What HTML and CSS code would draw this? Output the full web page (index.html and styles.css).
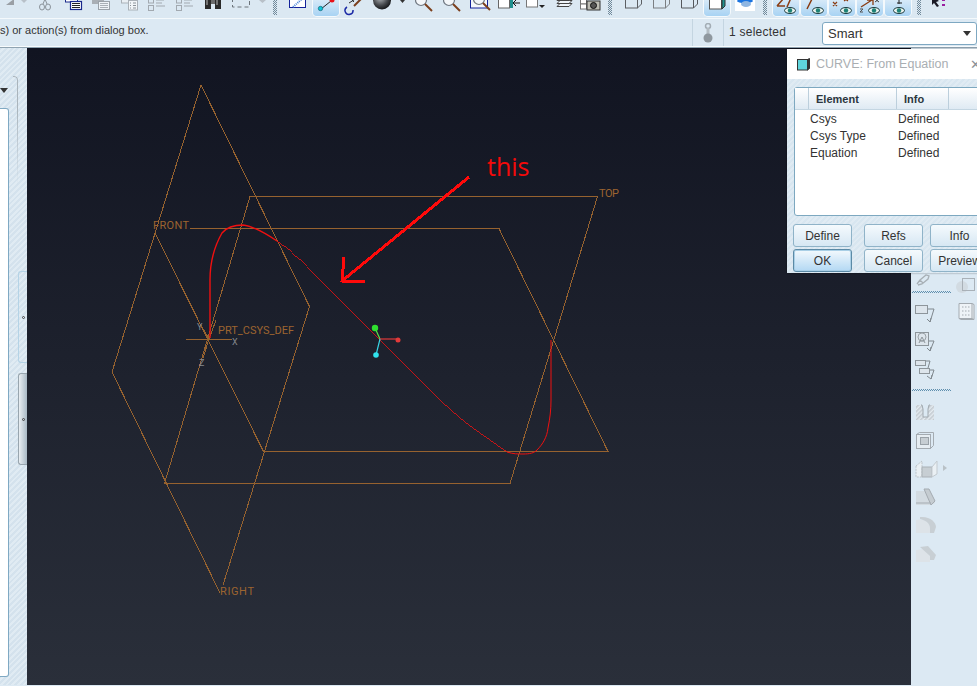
FILE: index.html
```html
<!DOCTYPE html>
<html lang="en">
<head>
<meta charset="utf-8">
<title>CURVE: From Equation</title>
<link rel="stylesheet" href="styles.css">
</head>
<body>
<svg class="defs" aria-hidden="true">
  <defs>
    <radialGradient id="ball" cx="0.4" cy="0.35" r="0.7"><stop offset="0" stop-color="#b4b8bc"/><stop offset="0.6" stop-color="#45484c"/><stop offset="1" stop-color="#0e0f11"/></radialGradient>
    <pattern id="hatch" width="3" height="3" patternUnits="userSpaceOnUse" patternTransform="rotate(45)"><rect width="3" height="3" fill="#e4ebf0"/><rect width="1.500" height="3" fill="#c3cad0"/></pattern>
    <symbol id="eye" viewBox="0 0 12 7"><ellipse cx="6" cy="3.500" rx="5.500" ry="3" fill="#e9f2ee" stroke="#1c3b3d"/><circle cx="6" cy="3.500" r="2.200" fill="#1d8276"/></symbol>
    <symbol id="glass" viewBox="0 0 18 14"><circle cx="6" cy="1" r="5.500" fill="#f4f7fa" stroke="#6f7780" stroke-width="1.200"/><path d="M10 5l7 7" stroke="#7b3f1d" stroke-width="2"/></symbol>
  </defs>
</svg>
<div class="app">
  <div class="toolbar">
    <div class="tool small"><svg class="ic-s" viewBox="0 0 14 16"><path d="M4 5L12 -1V5z" fill="#9a9fa5"/></svg></div>
    <div class="tool small"><svg class="ic-s" viewBox="0 0 14 16"><path d="M4 0h6l-3 3z" fill="#b8c0c8"/></svg></div>
    <div class="tool"><svg class="ic" viewBox="0 0 26 16"><g fill="none" stroke="#8b939a"><ellipse cx="10" cy="7" rx="2.500" ry="3"/><ellipse cx="16" cy="7" rx="2.500" ry="3"/><path d="M11 4l2-5M15 4l-2-5"/></g></svg></div>
    <div class="tool"><svg class="ic" viewBox="0 0 26 16"><rect x="5.500" y="-3" width="12" height="5" fill="#fff" stroke="#1a2a8c"/><rect x="10.500" y="1.500" width="11" height="8" fill="#fff" stroke="#1a2a8c" stroke-width="1.200"/><path d="M12 3.500h8M12 5.500h8M12 7.500h8" stroke="#222"/></svg></div>
    <div class="tool"><svg class="ic" viewBox="0 0 26 16"><rect x="4" y="-3" width="12" height="7" fill="#a9afb5"/><rect x="10.500" y="1.500" width="11" height="8" fill="#eef3f7" stroke="#9aa2a9"/><path d="M12 3.500h8M12 5.500h8M12 7.500h8" stroke="#a9b0b6"/></svg></div>
    <div class="tool"><svg class="ic" viewBox="0 0 26 16"><rect x="5.500" y="-3" width="8" height="6" fill="#e9eff4" stroke="#aab1b8"/><rect x="12.500" y="0.500" width="9" height="9.500" fill="#f1f5f8" stroke="#aab1b8"/><path d="M14 3h1M14 5.500h1M14 8h1M17 3h3M17 5.500h3M17 8h3" stroke="#8b939a"/></svg></div>
    <div class="tool"><svg class="ic" viewBox="0 0 26 16"><g fill="none" stroke="#a2a9b0"><rect x="4.500" y="-2" width="5" height="5"/><rect x="4.500" y="5.500" width="5" height="5"/><path d="M12 0h8M12 3h6M12 6h9"/></g></svg></div>
    <div class="tool"><svg class="ic" viewBox="0 0 26 16"><g fill="none" stroke="#a2a9b0"><rect x="4.500" y="-2" width="5" height="5"/><rect x="4.500" y="5.500" width="5" height="5"/><path d="M12 0h8M12 3h6M12 6h9"/></g></svg></div>
    <div class="tool"><svg class="ic" viewBox="0 0 26 16"><rect x="5" y="-2" width="6" height="11" fill="#2a2a2a"/><rect x="15" y="-2" width="6" height="11" fill="#2a2a2a"/><rect x="11" y="-1" width="4" height="5" fill="#6b6b6b"/><path d="M7 0v5M17 0v5" stroke="#bbb"/></svg></div>
    <div class="tool"><svg class="ic" viewBox="0 0 26 16"><rect x="4.500" y="-3" width="17" height="10" fill="none" stroke="#6c747b" stroke-dasharray="4 3"/></svg></div>
    <div class="tool small"><svg class="ic-s" viewBox="0 0 14 16"><path d="M3 0h7l-3.500 3z" fill="#b8c0c8"/></svg></div>
    <div class="sep"></div>
    <div class="tool"><svg class="ic" viewBox="0 0 26 16"><rect x="4.500" y="-3" width="16" height="10.500" fill="#fff" stroke="#14239a"/><path d="M8 7l10-9" stroke="#4a86d8" stroke-width="2" stroke-dasharray="1 1"/></svg></div>
    <div class="tool on"><svg class="ic" viewBox="0 0 26 16"><path d="M8 9l10-8" stroke="#222"/><circle cx="7.500" cy="8.500" r="2.200" fill="#11c6d8" stroke="#06566a" stroke-width=".6"/><circle cx="19" cy="0" r="2.500" fill="#e81218"/></svg></div>
    <div class="tool"><svg class="ic" viewBox="0 0 26 16"><path d="M10 -1l3 3M16 -2L8 3" stroke="#333"/><path d="M13 6l8-8" stroke="#7b3f1d" stroke-width="2"/><path d="M6 7a4 4 0 1 0 6 3" fill="none" stroke="#1b2aa6" stroke-width="1.500"/></svg></div>
    <div class="tool"><svg class="ic" viewBox="0 0 26 16"><circle cx="13" cy="0.500" r="9" fill="url(#ball)"/></svg></div>
    <div class="tool arrow"><svg class="ic-a" viewBox="0 0 13 16"><path d="M4 0h5l-2.500 3z" fill="#333"/></svg></div>
    <div class="tool"><svg class="ic" viewBox="0 0 26 16"><use href="#glass" x="5" y="-1" width="18" height="14"/></svg></div>
    <div class="tool"><svg class="ic" viewBox="0 0 26 16"><use href="#glass" x="5" y="-1" width="18" height="14"/></svg></div>
    <div class="tool"><svg class="ic" viewBox="0 0 26 16"><rect x="4.500" y="-3" width="17" height="11" fill="#f5f8fb" stroke="#14239a"/><use href="#glass" x="7" y="-2" width="18" height="14"/></svg></div>
    <div class="tool"><svg class="ic" viewBox="0 0 26 16"><rect x="4.500" y="-3" width="11" height="11" fill="#fff" stroke="#666"/><rect x="16" y="-3" width="3" height="11" fill="#20908f"/><path d="M26 3h-7M22 0l-3 3 3 3" stroke="#111" fill="none"/></svg></div>
    <div class="tool"><svg class="ic" viewBox="0 0 26 16"><rect x="4.500" y="-3" width="11" height="10" fill="#fff" stroke="#777"/><path d="M17 5h6l-3 3z" fill="#222"/></svg></div>
    <div class="tool"><svg class="ic" viewBox="0 0 26 16"><g fill="#eef3f7" stroke="#444"><path d="M7 6.500h12l3-3H10z"/><path d="M7 3.500h12l3-3H10z"/><path d="M7 0.500h12l3-3H10z"/></g></svg></div>
    <div class="tool"><svg class="ic" viewBox="0 0 26 16"><rect x="2.500" y="-1" width="6" height="5" fill="#fff" stroke="#777"/><rect x="2.500" y="4" width="6" height="5" fill="#fff" stroke="#777"/><rect x="9" y="1" width="13" height="9" fill="#bdbdb5" stroke="#333"/><circle cx="15.500" cy="5.500" r="3" fill="#555" stroke="#111"/></svg></div>
    <div class="sep"></div>
    <div class="tool"><svg class="ic" viewBox="0 0 26 16"><g fill="none" stroke="#5c5f63"><rect x="5.500" y="-1" width="12" height="9"/><path d="M5.500 -1l4-4h12v9l-4 4M17.500 -1l4-4"/></g></svg></div>
    <div class="tool"><svg class="ic" viewBox="0 0 26 16"><g fill="none" stroke="#7b7e82"><rect x="5.500" y="-1" width="12" height="9"/><path d="M5.500 -1l4-4h12v9l-4 4M17.500 -1l4-4"/></g></svg></div>
    <div class="tool"><svg class="ic" viewBox="0 0 26 16"><g fill="none" stroke="#55585c"><path d="M5.500 -1v9h12v-9M17.500 8l4-4v-9"/></g></svg></div>
    <div class="tool on"><svg class="ic" viewBox="0 0 26 16"><rect x="5.500" y="-2" width="12" height="11" fill="#fff" stroke="#555"/><path d="M18 9l3-3V-4h-3z" fill="#20908f" stroke="#333"/></svg></div>
    <div class="tool"><svg class="ic" viewBox="0 0 26 16"><rect x="3" y="0" width="20" height="11" fill="#fff"/><ellipse cx="13" cy="1" rx="8" ry="2" fill="#1b74e0"/><ellipse cx="14" cy="4" rx="5" ry="3" fill="#8fb6e2"/></svg></div>
    <div class="sep tight"></div>
    <div class="tool on"><svg class="ic" viewBox="0 0 26 16"><path d="M4 6h8M4 6l7-8M18 -2l-4 9" stroke="#8a3d14" stroke-width="1.500" fill="none"/><use href="#eye" x="11" y="7" width="12" height="7"/></svg></div>
    <div class="tool on"><svg class="ic" viewBox="0 0 26 16"><path d="M6 9l5-10M14 -1h4" stroke="#8a3d14" stroke-width="1.500" fill="none"/><use href="#eye" x="11" y="7" width="12" height="7"/></svg></div>
    <div class="tool on"><svg class="ic" viewBox="0 0 26 16"><path d="M4 2l4 4M8 2l-4 4M15 -2l4 3M19 -2l-4 3" stroke="#8a3d14" stroke-width="1.200"/><use href="#eye" x="11" y="7" width="12" height="7"/></svg></div>
    <div class="tool on"><svg class="ic" viewBox="0 0 26 16"><path d="M4 7l11-7M10 0h6v5" stroke="#8a3d14" stroke-width="1.300" fill="none"/><path d="M3 9h3l-3 3h3" stroke="#555" fill="none"/><path d="M18 -1l4 3M22 -1l-4 3" stroke="#444"/><use href="#eye" x="11" y="7" width="12" height="7"/></svg></div>
    <div class="tool on"><svg class="ic" viewBox="0 0 26 16"><path d="M14 -2v6M12 3h5" stroke="#222"/><use href="#eye" x="8" y="7" width="12" height="7"/></svg></div>
    <div class="sep last"></div>
    <div class="tool"><svg class="ic" viewBox="0 0 26 16"><path d="M7 -4l7 5-3 1 3 4-2 1-3-4-2 2z" fill="#1a1a26"/><path d="M17 -1h3v2h-3zM17 4h3v2h-3z" fill="#9a1ea0"/></svg></div>
  </div>
  <div class="status">
    <div class="message">s) or action(s) from dialog box.</div>
    <div class="cell-therm"><svg class="therm" viewBox="0 0 12 20"><circle cx="6" cy="3" r="2.500" fill="none" stroke="#a3adb5" stroke-width="1.500"/><path d="M4.500 5h3v6h-3z" fill="#b3bcc3"/><circle cx="6" cy="15" r="4.500" fill="#8f989f"/></svg></div>
    <div class="selected">1 selected</div>
    <div class="combo"><span>Smart</span><i class="caret"></i></div>
  </div>
  <div class="main">
    <aside class="left">
      <div class="nav">
        <div class="nav-tab"><i class="caret"></i></div>
        <div class="nav-box"></div>
      </div>
      <div class="sashes">
        <div class="sash"><i></i></div>
        <div class="sash active"><i></i></div>
      </div>
    </aside>
    <svg class="canvas" viewBox="27 48 884 637">
      <g class="plane">
        <path d="M250 196.500H597.500L510 483.500H164.500L250 196.500"/>
        <path d="M155 233L263.500 451.500H608L499 228.500H190"/>
        <path d="M201 85L309.500 306.500L223 585M220 593L112 372L201 85"/>
        <path d="M186 339.500H232M209 339L199 322M209 339L203 358M209 339L216 320"/>
      </g>
      <text class="label" x="153" y="229" textLength="36">FRONT</text>
      <text class="label" x="599" y="197" textLength="20">TOP</text>
      <text class="label" x="220" y="595" textLength="34">RIGHT</text>
      <text class="label" x="218" y="334" textLength="76">PRT_CSYS_DEF</text>
      <text class="label tiny" x="197" y="330">Y</text>
      <text class="label tiny" x="232" y="345">X</text>
      <text class="label tiny" x="199" y="366">Z</text>
      <path class="curve thick" d="M210 338V280C210 262 214 247 222 233C227 227 235 225 243 225C253 226 265 233 277 241"/>
      <path class="curve thin" d="M277 241C287 248 297 257 307 267L440 400C455 414 468 425 480 433L507 452"/>
      <path class="curve" d="M507 452C513 454 518 454 523 454C530 454 534 453 537 450C543 444 547 437 548 428C550 418 551 410 551 400V340"/>
      <g class="triad">
        <path d="M380 339L375 328" stroke="#5fe04a"/>
        <path d="M380 339H398" stroke="#e23a3a"/>
        <path d="M380 339L376 355" stroke="#38d8e8"/>
        <circle cx="375" cy="328" r="3.200" fill="#2fe02f"/>
        <circle cx="398" cy="340" r="2.500" fill="#e23a3a"/>
        <circle cx="376" cy="355" r="2.800" fill="#30e4ee"/>
      </g>
      <path class="note" d="M469 177L342 281M344 257L342 281L365 282"/>
      <text class="note-text" x="487" y="176">this</text>
    </svg>
    <aside class="right">
      <div class="right-a">
        <svg class="pencil" viewBox="0 0 38 18"><path d="M5 14l3-4 6-5 3 1-1 3-6 5-4 1M8 10l3 3" fill="none" stroke="#a7afb5" stroke-width="1.300"/></svg>
        <div class="dots d1"></div>
        <svg class="rb" viewBox="0 0 38 28"><rect x="3.500" y="3.500" width="12" height="8" fill="#dde5ec" stroke="#8d959b"/><path d="M16 7h6l-4 13M15 17l3 3 1-4" fill="none" stroke="#7f878d"/></svg>
        <svg class="rb" viewBox="0 0 38 28"><rect x="3.500" y="2.500" width="13" height="13" fill="#dde5ec" stroke="#8d959b"/><circle cx="10" cy="7" r="4" fill="none" stroke="#9aa2a8"/><path d="M7 13l3-6 3 6M8 11h4" stroke="#8d959b" fill="none"/><path d="M17 11h5l-4 10M15 18l3 3 1-4" fill="none" stroke="#7f878d"/></svg>
        <svg class="rb" viewBox="0 0 38 28"><rect x="3.500" y="2.500" width="10" height="5" fill="#dde5ec" stroke="#8d959b"/><rect x="7.500" y="10.500" width="10" height="5" fill="#dde5ec" stroke="#8d959b"/><path d="M14 3h4l-2 7M18 12h4l-3 9M15 18l4 3 1-4" fill="none" stroke="#7f878d"/></svg>
        <div class="dots d2"></div>
        <svg class="rb" viewBox="0 0 38 28"><rect x="4" y="3" width="18" height="15" fill="url(#hatch)"/><path d="M9 3h1l1 4v8h5V7l1-4h1" fill="#dce9f3" stroke="#a0a8ae"/></svg>
        <svg class="rb" viewBox="0 0 38 28"><rect x="4.500" y="4.500" width="14" height="14" fill="#e6edf2" stroke="#a4abb1"/><path d="M4.500 4.500l3-2h14v13l-3 3" fill="none" stroke="#a4abb1"/><rect x="8.500" y="7.500" width="8" height="7" fill="#c7ced3" stroke="#9aa2a8"/></svg>
        <svg class="rb" viewBox="0 0 38 28"><path d="M4 8l6-5v16H4z" fill="#eaf0f4" stroke="#bcc3c8" stroke-dasharray="2 1"/><path d="M10 9h10v10H10z" fill="#c7ced3" stroke="#aab1b6"/><path d="M20 9l5-6v13l-5 3z" fill="#eaf0f4" stroke="#c3cacf"/><path d="M31 7l4 3-4 3z" fill="#b9c1c6"/></svg>
        <svg class="rb" viewBox="0 0 38 28"><path d="M4 5h14l5 12-4 2H4z" fill="#d3dbe1"/><path d="M4 17h15M12 3h5l6 12-4 4z" fill="#c5ccd1" stroke="#a4abb1"/></svg>
        <svg class="rb" viewBox="0 0 38 28"><path d="M4 6c8-2 14 2 14 8v5H4z" fill="#dde3e8"/><path d="M8 3c10-1 16 5 16 10l-2 6h-4v-5c0-5-5-8-10-9z" fill="#c8cfd4"/></svg>
        <svg class="rb" viewBox="0 0 38 28"><path d="M4 8l8-1 6 7v6H4z" fill="#dde3e8"/><path d="M8 5l8-1 8 9-2 5h-4v-4z" fill="#c8cfd4"/></svg>
      </div>
      <div class="right-b">
        <svg class="cube-a" viewBox="0 0 20 18"><circle cx="6" cy="11" r="6" fill="#d2dbe2"/><rect x="6.500" y="2.500" width="12" height="12" fill="none" stroke="#a9b1b8"/></svg>
        <svg class="cube-b" viewBox="0 0 20 18"><path d="M3 1.500h13v15H3zM16 1.500l2 1v15l-2-1M3 16.500l2 1h13" fill="#eef3f7" stroke="#a4abb1"/><path d="M6 5h8M6 9h8M6 13h8" stroke="#a4abb1" stroke-dasharray="1.500 1.500"/></svg>
      </div>
    </aside>
  </div>
  <section class="dialog">
    <header class="dlg-title">
      <svg class="dlg-icon" viewBox="0 0 13 13"><rect x="0.500" y="1.500" width="10" height="10.500" fill="#5fd5dc" stroke="#333"/><path d="M10.500 1.500l2-1v10l-2 1.500" fill="#333" stroke="#333"/></svg>
      <span class="dlg-name">CURVE: From Equation</span>
      <span class="dlg-close">✕</span>
    </header>
    <div class="dlg-body">
      <div class="table">
        <div class="thead"><span class="th th0"></span><span class="th th1">Element</span><span class="th th2">Info</span><span class="th th3"></span></div>
        <div class="row"><span class="c1">Csys</span><span class="c2">Defined</span></div>
        <div class="row"><span class="c1">Csys Type</span><span class="c2">Defined</span></div>
        <div class="row"><span class="c1">Equation</span><span class="c2">Defined</span></div>
      </div>
      <div class="buttons">
        <button class="btn">Define</button>
        <button class="btn">Refs</button>
        <button class="btn">Info</button>
        <button class="btn default">OK</button>
        <button class="btn">Cancel</button>
        <button class="btn">Preview</button>
      </div>
    </div>
  </section>
</div>
</body>
</html>
```
FILE: styles.css
```css
html, body {
  margin: 0;
  height: 100%;
  overflow: hidden;
}
body {
  font-family: "Liberation Sans", Arial, sans-serif;
  color: #333;
  background: #dce9f3;
}
.defs {
  position: absolute;
  width: 0;
  height: 0;
}
.app {
  position: relative;
  width: 977px;
  height: 686px;
  overflow: hidden;
  background: #dce9f3;
}

/* top toolbar */
.toolbar {
  display: flex;
  height: 18px;
  padding-left: 1px;
  background: #dbe8f2;
  border-bottom: 1px solid #f4f9fc;
  overflow: hidden;
}
.tool {
  flex: none;
  width: 28px;
  height: 18px;
  display: flex;
  justify-content: center;
  align-items: flex-start;
}
.tool.small { width: 15px; }
.tool.arrow { width: 13px; }
.ic { display: block; width: 26px; height: 16px; overflow: hidden; }
.ic-s { display: block; width: 14px; height: 16px; }
.ic-a { display: block; width: 13px; height: 16px; }
.tool.on .ic {
  background: linear-gradient(#d6e9f8, #a8d3f3);
  border-radius: 0 0 4px 4px;
  box-shadow: 0 0 0 1px #f4f9fc;
}
.sep {
  flex: none;
  width: 4px;
  height: 15px;
  margin: 0 7px 0 3px;
  background: repeating-conic-gradient(#71899a 0 25%, transparent 0 50%) 0 0 / 2px 2px;
}
.sep.tight { margin: 0 5px 0 4px; }
.sep.last { margin: 0 3px 0 5px; }

/* status row */
.status {
  display: flex;
  height: 27px;
  background: #dce9f3;
  border-bottom: 1px solid #f7fbfd;
  box-shadow: 0 1px 0 #8fa3b1;
  position: relative;
  font-size: 12px;
}
.message {
  width: 692px;
  font-size: 11px;
  line-height: 23px;
  white-space: nowrap;
}
.cell-therm {
  width: 30px;
  border-left: 1px solid #c4d5e1;
  border-right: 1px solid #c4d5e1;
  display: flex;
  justify-content: center;
  align-items: center;
}
.therm { width: 12px; height: 20px; }
.selected {
  width: 93px;
  padding-left: 5px;
  line-height: 27px;
  letter-spacing: 0.02em;
}
.combo {
  width: 143px;
  height: 21px;
  margin-top: 3px;
  border: 1px solid #7ea8c2;
  border-radius: 3px;
  background: #fff;
  display: flex;
  align-items: center;
  justify-content: space-between;
  padding: 0 5px;
  font-size: 13px;
}
.caret {
  display: block;
  width: 0;
  height: 0;
  border-left: 4px solid transparent;
  border-right: 4px solid transparent;
  border-top: 5px solid #333;
}

/* main area */
.main {
  display: flex;
  height: 637px;
  margin-top: 1px;
}
.left {
  flex: none;
  width: 27px;
  display: flex;
  background: repeating-linear-gradient(135deg, #d4e2ed 0 2px, #e0ebf3 2px 4px);
}
.nav {
  flex: none;
  width: 18px;
  padding-top: 28px;
  position: relative;
}
.nav::after {
  content: "";
  position: absolute;
  top: 28px;
  right: 0;
  width: 4px;
  height: 108px;
  border-top: 1px solid #aab4bb;
  border-right: 1px solid #aab4bb;
  border-radius: 0 4px 0 0;
  -webkit-mask-image: linear-gradient(#000 30%, transparent);
  mask-image: linear-gradient(#000 30%, transparent);
}
.nav-tab {
  height: 32px;
  display: flex;
  align-items: flex-start;
  padding-top: 12px;
  box-sizing: border-box;
}
.nav-box {
  width: 9px;
  height: 569px;
  background: #fff;
  border: 1px solid #7fa9c3;
  border-left: 0;
  border-radius: 0 3px 3px 0;
  box-sizing: border-box;
}
.sashes {
  flex: none;
  width: 9px;
  padding-top: 223px;
  display: flex;
  flex-direction: column;
  gap: 10px;
}
.sash {
  height: 92px;
  border: 1px solid #b4d3e6;
  border-right: 0;
  border-radius: 3px 0 0 3px;
  box-sizing: border-box;
  display: flex;
  align-items: center;
  padding-left: 3px;
}
.sash i {
  display: block;
  width: 1px;
  height: 1px;
  border: 1px solid #444;
  border-radius: 50%;
}
.sash.active {
  background: linear-gradient(90deg, #e9eef2, #a9b9c5);
  border-color: #98a5ae;
}
.canvas {
  flex: none;
  display: block;
  width: 884px;
  height: 637px;
  background: linear-gradient(#111421, #2a2f3a);
}
.plane {
  fill: none;
  stroke: #96622f;
  stroke-width: 1;
  shape-rendering: crispEdges;
}
.label {
  fill: #9c6430;
  font-family: Roboto, "Liberation Sans", sans-serif;
  font-size: 11px;
}
.label.tiny { font-size: 9px; fill: #85898e; }
.curve {
  fill: none;
  stroke: #f01010;
  stroke-width: 1;
}
.curve.thin {
  stroke-width: 0.8;
  shape-rendering: crispEdges;
}
.curve.thick { stroke-width: 1.4; }
.triad path { fill: none; stroke-width: 1.2; }
.note {
  fill: none;
  stroke: #ff0a0a;
  stroke-width: 3;
  shape-rendering: crispEdges;
}
.note-text {
  fill: #f50a0a;
  font-family: "Open Sans", "Noto Sans", sans-serif;
  font-size: 25px;
}
.right {
  flex: none;
  width: 66px;
  display: flex;
  background: #dce9f3;
}
.right-a {
  flex: none;
  width: 40px;
  padding: 222px 0 0 1px;
  box-sizing: border-box;
}
.pencil { display: block; width: 38px; height: 18px; }
.rb { display: block; width: 38px; height: 28px; }
.dots {
  width: 39px;
  height: 2px;
  background: repeating-conic-gradient(#5f8fae 0 25%, transparent 0 50%) 0 0 / 2px 2px;
}
.d1 { margin: 3px 0 9px; }
.d2 { margin: 3px 0 11px; }
.right-b {
  flex: none;
  padding: 228px 0 0 5px;
}
.cube-a { display: block; width: 20px; height: 18px; margin-bottom: 8px; }
.cube-b { display: block; width: 20px; height: 18px; }

/* dialog */
.dialog {
  position: absolute;
  left: 787px;
  top: 49px;
  width: 210px;
  height: 224px;
  box-shadow: 0 0 2px rgba(0, 0, 0, 0.4);
  display: flex;
  flex-direction: column;
  background: #dce9f3;
}
.dlg-title {
  height: 30px;
  flex: none;
  background: #fff;
  display: flex;
  align-items: center;
  padding-left: 10px;
}
.dlg-icon { width: 13px; height: 13px; margin-right: 6px; }
.dlg-name {
  width: 154px;
  font-size: 12.5px;
  color: #a9aeb2;
  white-space: nowrap;
}
.dlg-close {
  color: #8c9297;
  font-size: 13px;
}
.dlg-body {
  flex: 1;
  padding: 8px 0 0 6px;
  background: repeating-linear-gradient(135deg, #d8e6f0 0 2px, #e0ebf3 2px 4px);
}
.table {
  box-sizing: border-box;
  margin-left: 1px;
  width: 200px;
  height: 129px;
  background: #fff;
  border: 1px solid #7da8c0;
  border-radius: 3px;
}
.thead {
  display: flex;
  height: 22px;
  box-sizing: border-box;
  background: linear-gradient(#ffffff, #dfeaf3);
  border-bottom: 1px solid #c4d6e2;
  font-size: 11px;
  font-weight: bold;
  line-height: 23px;
  margin-bottom: 1px;
  color: #2c3740;
}
.th { display: block; box-sizing: border-box; border-right: 1px solid #bccfdc; padding-left: 7px; }
.th0 { width: 14px; padding: 0; }
.th1 { width: 88px; }
.th2 { width: 52px; }
.th3 { flex: 1; border: 0; }
.row {
  display: flex;
  height: 17px;
  line-height: 17px;
  font-size: 12px;
  padding-left: 15px;
}
.c1 { width: 88px; }
.buttons {
  display: grid;
  grid-template-columns: 71px 66px 59px;
  grid-auto-rows: 23px;
  row-gap: 2px;
  margin-top: 8px;
}
.btn {
  width: 59px;
  height: 23px;
  padding: 0;
  font: 12px "Liberation Sans", Arial, sans-serif;
  color: #333;
  background: linear-gradient(#f5fafd, #d6e7f3);
  border: 1px solid #8fb3c8;
  border-radius: 3px;
}
.btn.default {
  background: linear-gradient(#f3f9fd, #b3d8f3);
  border: 1px solid #5b8aa6;
  box-shadow: inset 0 0 0 1px #a9cfe6;
}
```
